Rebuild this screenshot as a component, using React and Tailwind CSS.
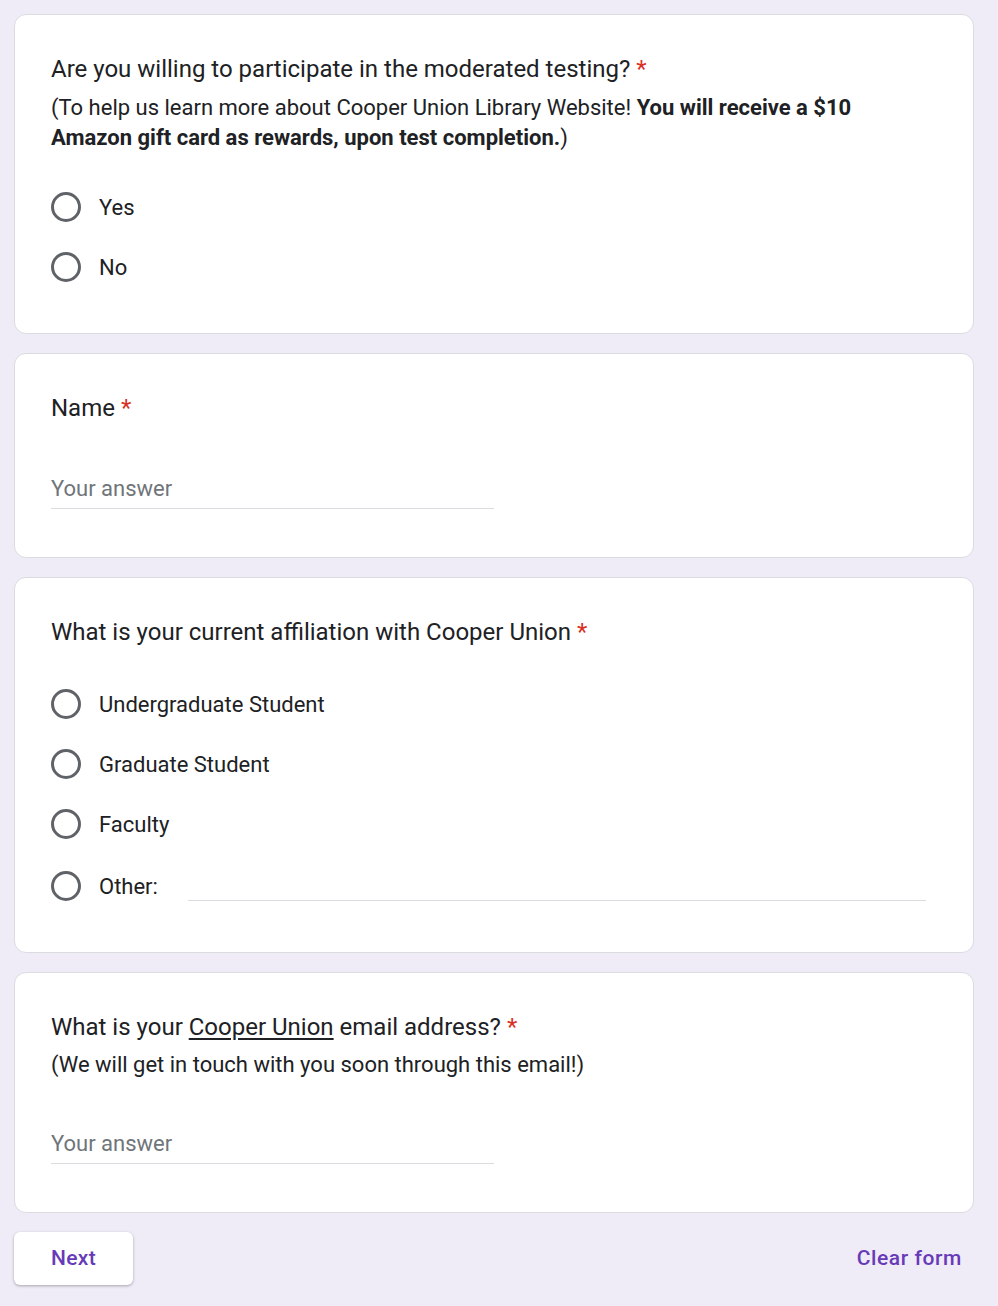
import React from 'react';

const FONT = { fontFamily: 'Roboto, "Liberation Sans", sans-serif' };

function Star() {
  return <span className="text-[#d93025] ml-[6px]">*</span>;
}

function Radio({ label, tall, children }) {
  return (
    <div className={`flex items-center ${tall ? 'h-[64px]' : 'h-[60px]'}`}>
      <span className="w-[30px] h-[30px] rounded-full border-[3px] border-[#5f6368] shrink-0" />
      <span className="ml-[18px] text-[22px] text-[#202124]">{label}</span>
      {children}
    </div>
  );
}

function Card({ children, className = '' }) {
  return (
    <div className={`bg-white rounded-[12px] border border-[#dadce0] px-[36px] ${className}`}>
      {children}
    </div>
  );
}

function AnswerLine() {
  return (
    <div className="w-[443px] border-b border-[#dadce0] pb-[5px] text-[22px] leading-[28px] text-[#70757a]">
      Your answer
    </div>
  );
}

export default function App() {
  return (
    <div className="min-h-[1306px] bg-[#efebf7] px-[14px] pt-[14px]" style={FONT}>
      <div className="flex flex-col gap-[19px] w-[960px]">
        {/* participation */}
        <Card className="pt-[38px] pb-[36px]">
          <div className="text-[24px] text-[#202124] leading-[32px]">
            Are you willing to participate in the moderated testing?<Star />
          </div>
          <div className="text-[22px] text-[#202124] leading-[30px] mt-[8px]">
            (To help us learn more about Cooper Union Library Website! <b>You will receive a $10 Amazon gift card as rewards, upon test completion.</b>)
          </div>
          <div className="mt-[24px]">
            <Radio label="Yes" />
            <Radio label="No" />
          </div>
        </Card>

        {/* name */}
        <Card className="pt-[38px] pb-[48px]">
          <div className="text-[24px] text-[#202124] leading-[32px]">
            Name<Star />
          </div>
          <div className="mt-[51px]">
            <AnswerLine />
          </div>
        </Card>

        {/* affiliation */}
        <Card className="pt-[38px] pb-[34px]">
          <div className="text-[24px] text-[#202124] leading-[32px]">
            What is your current affiliation with Cooper Union<Star />
          </div>
          <div className="mt-[26px]">
            <Radio label="Undergraduate Student" />
            <Radio label="Graduate Student" />
            <Radio label="Faculty" />
            <Radio label="Other:" tall>
              <div className="flex-1 ml-[30px] mr-[11px] self-end mb-[17px] border-b border-[#dadce0]" />
            </Radio>
          </div>
        </Card>

        {/* email */}
        <Card className="pt-[38px] pb-[48px]">
          <div className="text-[24px] text-[#202124] leading-[32px]">
            What is your <span className="underline underline-offset-[3px]">Cooper Union</span> email address?<Star />
          </div>
          <div className="text-[22px] text-[#202124] leading-[30px] mt-[7px]">
            (We will get in touch with you soon through this email!)
          </div>
          <div className="mt-[50px]">
            <AnswerLine />
          </div>
        </Card>

        <div className="flex items-center justify-between">
          <button className="w-[119px] h-[53px] bg-white rounded-[6px] shadow-[0_1px_3px_rgba(0,0,0,0.3)] text-[21px] font-medium text-[#673ab7] tracking-[0.3px]">
            Next
          </button>
          <button className="text-[21px] font-medium text-[#673ab7] mr-[12px] tracking-[0.6px]">
            Clear form
          </button>
        </div>
      </div>
    </div>
  );
}
